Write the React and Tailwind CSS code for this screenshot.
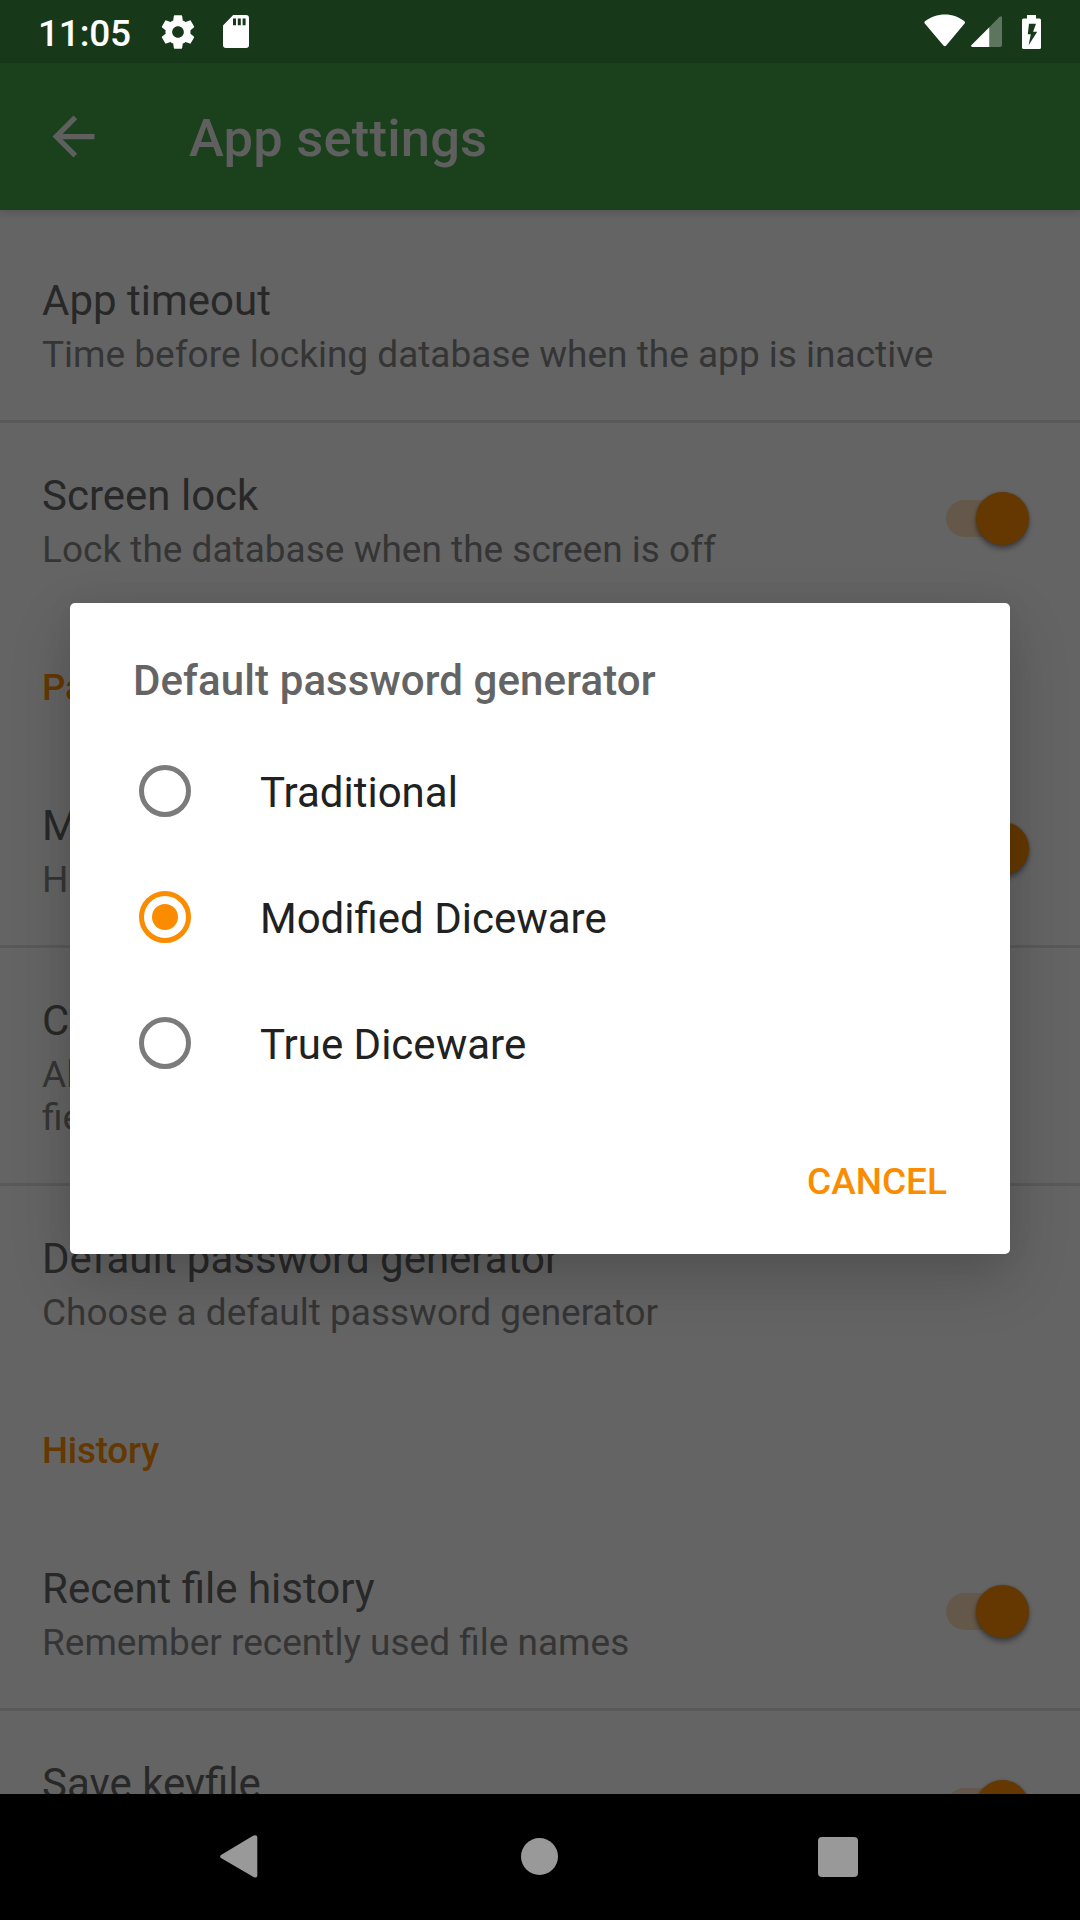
import React from "react";

function Toggle() {
  return (
    <div className="mr-[51px] mb-[1px] flex h-[53px] w-[83px] items-center">
      <div className="flex h-[37px] w-[76px] items-center justify-end rounded-full bg-[#64584a]">
        <div className="-mr-[7px] size-[53px] shrink-0 rounded-full bg-[#643800] shadow-[0_4px_5px_rgba(0,0,0,0.35),0_0_3px_rgba(0,0,0,0.2)]" />
      </div>
    </div>
  );
}

function Row({ title, summary, tall, toggle, divider }) {
  return (
    <div
      className={
        (tall ? "h-[235px] " : "h-[192px] ") +
        (divider ? "box-content border-b-[3px] border-[#595959] " : "") +
        "flex shrink-0 items-center justify-between"
      }
    >
      <div className="flex h-full flex-col gap-[8px] pt-[48px] pl-[42px]">
        <div className="text-[42px] leading-[49px] text-[#282828]">{title}</div>
        <div className="text-[37px] leading-[43px] whitespace-pre-line text-[#353535]">{summary}</div>
      </div>
      {toggle && <Toggle />}
    </div>
  );
}

function Category({ children }) {
  return (
    <div className="h-[138px] shrink-0 pt-[51px] pl-[42px] text-[36.75px] leading-[43px] font-medium tracking-[-0.2px] text-[#643800]">
      {children}
    </div>
  );
}

function Option({ label, checked }) {
  return (
    <div className="flex h-[126px] items-center">
      <div
        className={
          (checked ? "border-[#fb8c00] " : "border-[#7b7b7b] ") +
          "mb-[1px] ml-[69px] flex size-[52px] items-center justify-center rounded-full border-[5px]"
        }
      >
        {checked && <div className="size-[26px] rounded-full bg-[#fb8c00]" />}
      </div>
      <div className="ml-[69px] pt-[3px] text-[42px] leading-[49px] text-[#212121]">{label}</div>
    </div>
  );
}

function StatusBar() {
  return (
    <div className="flex h-[63px] shrink-0 items-center justify-between bg-[#173919] text-white">
      <div className="flex items-center">
        <span className="ml-[38px] w-[116px] pt-[4px] text-[37px] leading-[43px] font-medium tracking-[-0.2px]">11:05</span>
        <svg className="ml-[4px] size-[40px]" viewBox="0 0 24 24" fill="currentColor">
          <path d="M19.43 12.98c.04-.32.07-.64.07-.98s-.03-.66-.07-.98l2.11-1.65c.19-.15.24-.42.12-.64l-2-3.46c-.12-.22-.39-.3-.61-.22l-2.49 1c-.52-.4-1.08-.73-1.69-.98l-.38-2.65C14.46 2.18 14.25 2 14 2h-4c-.25 0-.46.18-.49.42l-.38 2.65c-.61.25-1.17.59-1.69.98l-2.49-1c-.23-.09-.49 0-.61.22l-2 3.46c-.13.22-.07.49.12.64l2.11 1.65c-.04.32-.07.65-.07.98s.03.66.07.98l-2.11 1.65c-.19.15-.24.42-.12.64l2 3.46c.12.22.39.3.61.22l2.49-1c.52.4 1.08.73 1.69.98l.38 2.65c.03.24.24.42.49.42h4c.25 0 .46-.18.49-.42l.38-2.65c.61-.25 1.17-.59 1.69-.98l2.49 1c.23.09.49 0 .61-.22l2-3.46c.12-.22.07-.49-.12-.64l-2.11-1.65zM12 15.5c-1.93 0-3.5-1.57-3.5-3.5s1.57-3.5 3.5-3.5 3.5 1.57 3.5 3.5-1.57 3.5-3.5 3.5z" />
        </svg>
        <svg className="ml-[25px] h-[33px] w-[26px]" viewBox="0 0 26 33" fill="currentColor">
          <path
            fillRule="evenodd"
            d="M10.2 0H23a3 3 0 0 1 3 3v27a3 3 0 0 1-3 3H3a3 3 0 0 1-3-3V10.4zM10 3.4v6.8h3V3.4zm4.8 0v6.8h3V3.4zm4.8 0v6.8h3V3.4z"
          />
        </svg>
      </div>
      <div className="flex items-center pr-[39px]">
        <svg className="mb-[2px] h-[33px] w-[42px]" viewBox="0 0 42 33" fill="currentColor">
          <path d="M1 7.3C.2 8 .2 8.800.8 9.600L19.400 31.600q1.400 1.500 2.800 0L40.600 9.600q1-1.400-.2-2.300C35 3 28.500.500 21 .500S6.500 3 1 7.300z" />
        </svg>
        <svg className="ml-[5px] h-[31px] w-[31px]" viewBox="0 0 31 31" fill="currentColor">
          <path opacity=".3" d="M18.300 11.300 28.300.9Q31-.8 31 2v27q0 2-2 2H18.300z" />
          <path d="M18.300 11.300V31H1.200Q-.6 30.600.3 29.200z" />
        </svg>
        <svg className="ml-[20px] h-[34px] w-[19px]" viewBox="0 0 19 34" fill="currentColor">
          <path
            fillRule="evenodd"
            d="M5 0h9v3.500h3.500Q19 3.500 19 5v27.500q0 1.500-1.500 1.500h-16Q0 34 0 32.500V5q0-1.500 1.500-1.500H5zM7 8.800 5.800 19.300h3L6.600 30.300 15.200 16.800H11.100L14 8.800z"
          />
        </svg>
      </div>
    </div>
  );
}

export default function App() {
  return (
    <div className="relative flex h-[1920px] w-[1080px] flex-col overflow-hidden bg-[#646464] font-['Roboto',sans-serif]">
      <StatusBar />
      <header className="z-10 flex h-[147px] shrink-0 items-center bg-[#1b401c] text-[#5f5f5f] shadow-[0_2px_8px_rgba(0,0,0,0.18)]">
        <svg className="ml-[42px] size-[63px]" viewBox="0 0 24 24" fill="currentColor">
          <path d="M20 11H7.830l5.590-5.590L12 4l-8 8 8 8 1.410-1.410L7.830 13H20v-2z" />
        </svg>
        <h1 className="ml-[84px] pt-[3px] text-[52.5px] leading-[62px] font-medium tracking-[0.2px]">App settings</h1>
      </header>

      <main className="flex min-h-0 flex-1 flex-col overflow-hidden pt-[18px]">
        <Row title="App timeout" summary="Time before locking database when the app is inactive" divider />
        <Row title="Screen lock" summary="Lock the database when the screen is off" toggle />
        <Category>Passwords</Category>
        <Row title="Mask password" summary="Hide passwords by default" toggle divider />
        <Row
          title="Clipboard notifications"
          summary={"Allow clipboard notifications to copy entry\nfields"}
          tall
          divider
        />
        <Row title="Default password generator" summary="Choose a default password generator" />
        <Category>History</Category>
        <Row title="Recent file history" summary="Remember recently used file names" toggle divider />
        <Row title="Save keyfile" summary="Remember keyfile locations" toggle />
      </main>

      <nav className="z-10 flex h-[126px] shrink-0 items-center bg-black pb-[1px] text-[#999999]">
        <svg className="ml-[220px] h-[43px] w-[38px]" viewBox="0 0 38 43" fill="currentColor">
          <path d="M1 20 33.500.600Q37.300-.700 37.300 2.500v38Q37.300 43.500 33.500 42L1 23Q-.800 21.500 1 20z" />
        </svg>
        <div className="ml-[263px] size-[37px] rounded-full bg-[#999999]" />
        <div className="ml-[260px] size-[40px] rounded-[4px] bg-[#999999]" />
      </nav>

      <div
        role="dialog"
        className="absolute top-[603px] left-[70px] z-20 flex h-[651px] w-[940px] flex-col rounded-[5px] bg-white shadow-[0_24px_60px_rgba(0,0,0,0.18),0_0_30px_rgba(0,0,0,0.05)]"
      >
        <h2 className="pt-[53px] pb-[23px] pl-[63px] text-[42px] leading-[49px] font-medium tracking-[0.1px] text-[#646464]">
          Default password generator
        </h2>
        <Option label="Traditional" />
        <Option label="Modified Diceware" checked />
        <Option label="True Diceware" />
        <button className="mt-[48px] mr-[63px] self-end text-[37px] leading-[55px] font-medium text-[#fb8c00]">
          CANCEL
        </button>
      </div>
    </div>
  );
}
